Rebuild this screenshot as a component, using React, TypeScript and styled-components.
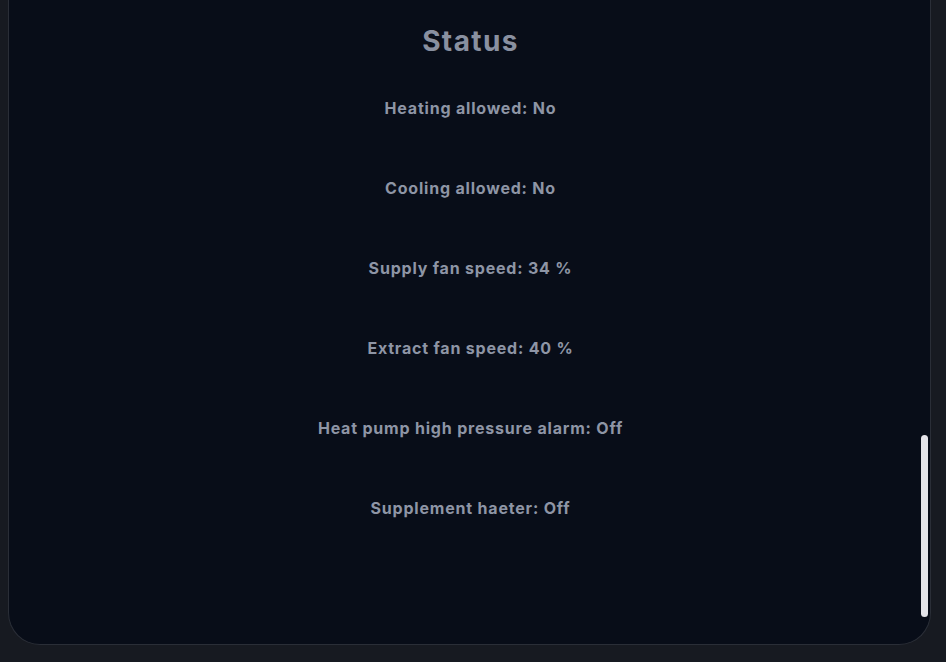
import React from "react";
import styled, { createGlobalStyle } from "styled-components";

const GlobalStyle = createGlobalStyle`
    html, body {
        margin: 0;
        padding: 0;
        background-color: #171a21;
        font-family: Inter, "Noto Sans", sans-serif;
    }
`

const Page = styled.div`
    height: 662px;
    box-sizing: border-box;
    padding: 0 15px 17px 8px;
    display: flex;
    flex-direction: column;
`

const Card = styled.section`
    position: relative;
    flex: 1;
    background-color: #080d18;
    border: 1px solid #2a2e37;
    border-top: none;
    border-radius: 0 0 32px 32px;
    display: flex;
    flex-direction: column;
    align-items: center;
    padding: 13px 0 0 2px;
    overflow: hidden;
`

const Title = styled.h2`
    margin: 0;
    font-size: 28px;
    line-height: 56px;
    font-weight: 700;
    letter-spacing: 0.05em;
    color: #8990a0;
`

const List = styled.ul`
    list-style: none;
    margin: -1px 0 0;
    padding: 0;
    display: flex;
    flex-direction: column;
    align-items: center;
`

const Row = styled.li`
    height: 80px;
    display: flex;
    align-items: center;
    font-size: 16px;
    font-weight: 700;
    letter-spacing: 0.05em;
    color: #8e95a5;
`

const ScrollThumb = styled.div`
    position: absolute;
    right: 2px;
    top: 435px;
    width: 7px;
    height: 182px;
    border-radius: 4px;
    background-color: #e4e4e9;
`

const statusItems = [
    { label: "Heating allowed", value: "No" },
    { label: "Cooling allowed", value: "No" },
    { label: "Supply fan speed", value: "34 %" },
    { label: "Extract fan speed", value: "40 %" },
    { label: "Heat pump high pressure alarm", value: "Off" },
    { label: "Supplement haeter", value: "Off" },
]

export default function App() {
    return (
        <>
            <GlobalStyle />
            <Page>
                <Card>
                    <Title>Status</Title>
                    <List>
                        {statusItems.map((item) => (
                            <Row key={item.label}>{item.label}: {item.value}</Row>
                        ))}
                    </List>
                    <ScrollThumb />
                </Card>
            </Page>
        </>
    )
}
